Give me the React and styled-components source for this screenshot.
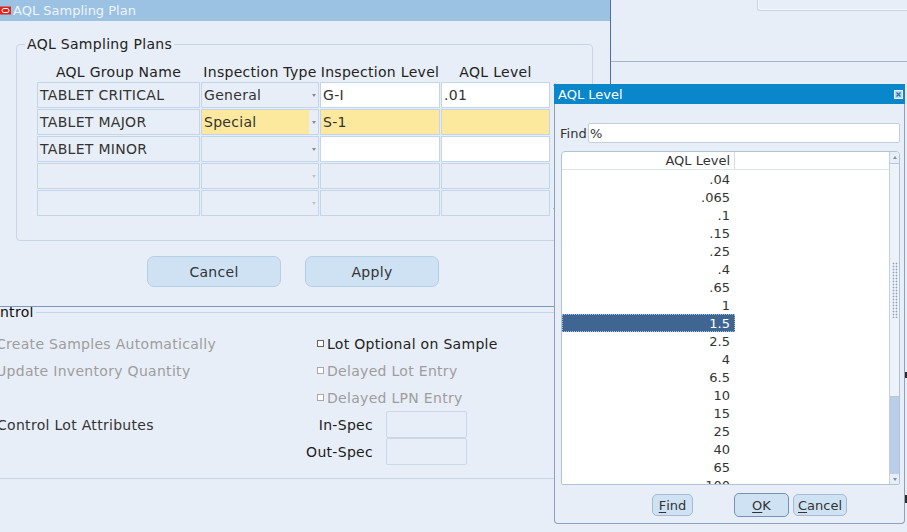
import React from 'react';
import styled, { createGlobalStyle } from 'styled-components';

const GlobalStyle = createGlobalStyle`
  html, body { margin: 0; padding: 0; }
  body { background: #e8eef7; font-family: "DejaVu Sans", "Liberation Sans", sans-serif; }
  *, *::before, *::after { box-sizing: border-box; }
`;

const BG = '#e8eef7';

const Screen = styled.div`
  position: relative;
  width: 907px;
  height: 532px;
  overflow: hidden;
  background: ${BG};
  color: #333;
  font-size: 14px;
  letter-spacing: 0.3px;
`;

/* ---------- background form ---------- */
const BackForm = styled.div`
  display: flex;
  flex-direction: column;
  width: 100%;
  height: 100%;
`;
const TopStrip = styled.div`
  height: 61px;
  display: flex;
  justify-content: flex-end;
  align-items: flex-start;
`;
const CornerPanel = styled.div`
  width: 150px;
  height: 11px;
  border-left: 1px solid #c7d3e2;
  border-bottom: 1px solid #c7d3e2;
  border-bottom-left-radius: 3px;
  box-shadow: inset 1px -1px 0 #f7fafd;
`;
const Rule = styled.div`
  border-top: 1px solid #a2b4c9;
`;
const ControlGroup = styled.div`
  margin-top: 250px;
  margin-left: -40px;
  width: 900px;
  border: 1px solid #c6d6ea;
  border-radius: 4px;
  padding: 0 0 13px 37px;
`;
const Legend = styled.div`
  width: fit-content;
  height: 18px;
  line-height: 18px;
  margin-top: -10px;
  margin-left: ${p => p.$offset}px;
  padding: 0 2px;
  background: ${BG};
  color: ${p => p.$color || '#222'};
  white-space: nowrap;
`;
const ControlGrid = styled.div`
  margin-top: 9px;
  display: flex;
`;
const Column = styled.div`
  width: ${p => p.$width}px;
  display: grid;
  grid-auto-rows: 27px;
`;
const Line = styled.div`
  display: flex;
  align-items: center;
  white-space: nowrap;
  padding-left: ${p => p.$indent || 0}px;
  margin-left: ${p => p.$shift || 0}px;
  color: ${p => (p.$disabled ? '#9d9d9d' : p.$strong ? '#222' : '#333')};
`;
const Check = styled.span`
  flex: none;
  width: 7px;
  height: 7px;
  margin-right: 3px;
  border: 1px solid ${p => (p.$disabled ? '#a8a8a8' : '#666')};
  background: #fff;
`;
const FieldLabel = styled.span`
  width: 73px;
  text-align: right;
  color: #1c1c1c;
`;
const SpecField = styled.div`
  width: 81px;
  height: 27px;
  margin-left: 13px;
  border: 1px solid #cbd8e8;
  border-radius: 2px;
  background: ${BG};
`;
const EdgeMarks = styled.div`
  position: absolute;
  right: 0;
  top: 372px;
  width: 2px;
  height: 131px;
  display: flex;
  flex-direction: column;
  justify-content: space-between;
`;
const EdgeMark = styled.span`
  width: 2px;
  height: ${p => p.$h}px;
  background: #2c2c2c;
`;

/* ---------- AQL Sampling Plan window ---------- */
const SamplingWindow = styled.section`
  position: absolute;
  left: 0;
  top: 0;
  width: 611px;
  height: 307px;
  background: ${BG};
  border-right: 1px solid #4e709c;
  border-bottom: 1px solid #7c98bc;
  display: flex;
  flex-direction: column;
`;
const WinTitle = styled.div`
  flex: none;
  height: 21px;
  background: #9bc2e2;
  display: flex;
  align-items: center;
  gap: 2px;
  color: #eef5fb;
  font-size: 13px;
  letter-spacing: 0;
`;
const WinBody = styled.div`
  padding: 23px 0 0 16px;
`;
const PlansGroup = styled.div`
  width: 577px;
  border: 1px solid #c6d6ea;
  border-radius: 4px;
  padding: 0 0 24px 20px;
`;
const TableWrap = styled.div`
  margin-top: 9px;
  display: flex;
`;
const TableCol = styled.div`
  display: flex;
  flex-direction: column;
`;
const HeadGrid = styled.div`
  display: grid;
  grid-template-columns: 163px 118px 120px 109px;
  column-gap: 1px;
  height: 20px;
`;
const HeadCell = styled.div`
  display: flex;
  align-items: center;
  justify-content: center;
  white-space: nowrap;
  color: #222;
`;
const BodyGrid = styled.div`
  display: grid;
  grid-template-columns: 163px 118px 120px 109px;
  grid-auto-rows: 26px;
  column-gap: 1px;
  row-gap: 1px;
`;
const tones = { plain: BG, edit: '#ffffff', current: '#fde99d' };
const Cell = styled.div`
  display: flex;
  align-items: center;
  padding-left: 2px;
  border: 1px solid #c4d4e9;
  background: ${p => tones[p.$tone]};
  color: #333;
  white-space: nowrap;
  overflow: hidden;
`;
const ComboCell = styled.div`
  display: flex;
  border: 1px solid #c4d4e9;
  background: ${BG};
  overflow: hidden;
`;
const ComboText = styled.div`
  flex: 1;
  display: flex;
  align-items: center;
  padding-left: 2px;
  background: ${p => tones[p.$tone]};
  color: #333;
  white-space: nowrap;
`;
const ArrowBox = styled.div`
  flex: none;
  width: 9px;
  display: flex;
  align-items: center;
  justify-content: center;
`;
const DownTri = styled.span`
  width: 0;
  height: 0;
  border-left: 2.5px solid transparent;
  border-right: 2.5px solid transparent;
  border-top: 3px solid ${p => p.$color || '#8a8a8a'};
`;
const UpTri = styled.span`
  width: 0;
  height: 0;
  border-left: 2.5px solid transparent;
  border-right: 2.5px solid transparent;
  border-bottom: 3px solid ${p => p.$color || '#8a8a8a'};
`;
const ScrollHint = styled.div`
  width: 8px;
  margin-left: 1px;
  padding: 21px 0 5px 2px;
  display: flex;
  flex-direction: column;
  justify-content: space-between;
`;
const ButtonRow = styled.div`
  margin-top: 15px;
  padding-left: 131px;
  display: flex;
  gap: 24px;
`;
const BigButton = styled.div`
  width: 134px;
  height: 31px;
  border: 1px solid #b7cee8;
  border-radius: 7px;
  background: #cfe2f4;
  display: flex;
  align-items: center;
  justify-content: center;
  color: #333;
`;

/* ---------- AQL Level LOV dialog ---------- */
const LovDialog = styled.section`
  position: absolute;
  left: 554px;
  top: 84px;
  width: 351px;
  height: 440px;
  display: flex;
  flex-direction: column;
  font-size: 13px;
  letter-spacing: 0;
`;
const LovTitle = styled.div`
  flex: none;
  height: 20px;
  background: #0a87ca;
  color: #fff;
  display: flex;
  align-items: center;
  padding-left: 4px;
`;
const CloseBox = styled.svg`
  margin-left: auto;
  margin-right: 2px;
`;
const LovBody = styled.div`
  flex: 1;
  background: ${BG};
  border: 1px solid #8ea2bc;
  border-top: none;
  border-radius: 0 0 4px 4px;
  padding: 19px 4px 6px 5px;
  display: flex;
  flex-direction: column;
`;
const FindRow = styled.div`
  height: 20px;
  display: flex;
  align-items: center;
`;
const FindInput = styled.div`
  width: 312px;
  height: 20px;
  margin-left: auto;
  border: 1px solid #c3cfdf;
  border-radius: 2px;
  background: #fff;
  display: flex;
  align-items: center;
  padding-left: 1px;
  color: #333;
`;
const ListBox = styled.div`
  margin: 8px 0 0 1px;
  width: 339px;
  height: 334px;
  border: 1px solid #b3c3d6;
  border-radius: 4px 4px 2px 2px;
  background: #fff;
  display: flex;
  overflow: hidden;
`;
const ListCol = styled.div`
  flex: 1;
  display: flex;
  flex-direction: column;
  overflow: hidden;
`;
const ListHeader = styled.div`
  flex: none;
  height: 18px;
  border-bottom: 1px solid #dfe4ea;
  display: flex;
`;
const ListHeadCell = styled.div`
  width: 173px;
  border-right: 1px solid #d6dce4;
  text-align: right;
  padding-right: 4px;
  line-height: 17px;
  color: #333;
`;
const ListRow = styled.div`
  flex: none;
  width: 173px;
  height: 18px;
  line-height: 20px;
  text-align: right;
  padding-right: 5px;
  color: ${p => (p.$selected ? '#fff' : '#333')};
  background: ${p => (p.$selected ? '#3f6592' : 'transparent')};
  outline: ${p => (p.$selected ? '1px dotted #a9bdd4' : 'none')};
  outline-offset: -1px;
`;
const ScrollBar = styled.div`
  width: 10px;
  border-left: 1px solid #c3d0df;
  background: ${BG};
  display: flex;
  flex-direction: column;
`;
const ScrollBtn = styled.div`
  flex: none;
  height: ${p => p.$h}px;
  display: flex;
  align-items: center;
  justify-content: center;
`;
const Thumb = styled.div`
  flex: none;
  height: 234px;
  border-top: 1px solid #b6c8dc;
  border-bottom: 1px solid #b6c8dc;
  background: #edf2f8;
  display: flex;
  justify-content: center;
  padding-top: 98px;
`;
const Grip = styled.div`
  width: 6px;
  height: 56px;
  background-image: radial-gradient(circle, #8fa4bd 0.8px, transparent 1.1px);
  background-size: 3px 3px;
`;
const Track = styled.div`
  flex: 1;
  background: #b9cee7;
`;
const LovButtons = styled.div`
  margin-top: 8px;
  height: 24px;
  padding-left: 92px;
  display: flex;
  align-items: center;
`;
const LovButton = styled.div`
  width: ${p => p.$w}px;
  height: ${p => (p.$default ? 24 : 22)}px;
  margin-left: ${p => p.$gap || 0}px;
  border: 1px solid ${p => (p.$default ? '#7590b3' : '#a5bbd4')};
  border-radius: 5px;
  background: #cfe2f4;
  display: flex;
  align-items: center;
  justify-content: center;
  color: #333;
  u { text-decoration: underline; text-underline-offset: 2px; }
`;

const OracleIcon = () => (
  <svg width="11" height="9" viewBox="0 0 11 9">
    <rect x="0" y="0.5" width="11" height="8" fill="#e2231a" />
    <rect x="2" y="2.5" width="7" height="4" rx="2" fill="none" stroke="#fff" strokeWidth="1" />
  </svg>
);

const rows = [
  { name: 'TABLET CRITICAL', type: 'General', level: 'G-I', aql: '.01', typeTone: 'plain', tone: 'edit' },
  { name: 'TABLET MAJOR', type: 'Special', level: 'S-1', aql: '', typeTone: 'current', tone: 'current' },
  { name: 'TABLET MINOR', type: '', level: '', aql: '', typeTone: 'plain', tone: 'edit' },
  { name: '', type: '', level: '', aql: '', typeTone: 'plain', tone: 'plain', dim: true },
  { name: '', type: '', level: '', aql: '', typeTone: 'plain', tone: 'plain', dim: true },
];

const levels = ['.04', '.065', '.1', '.15', '.25', '.4', '.65', '1', '1.5', '2.5', '4', '6.5', '10', '15', '25', '40', '65', '100'];

export default function App() {
  return (
    <Screen>
      <GlobalStyle />
      <BackForm>
        <TopStrip>
          <CornerPanel />
        </TopStrip>
        <Rule />
        <ControlGroup>
          <Legend $offset={-19} $color="#0d0d0d">Control</Legend>
          <ControlGrid>
            <Column $width={302}>
              <Line $disabled $shift={-2}>Create Samples Automatically</Line>
              <Line $disabled $shift={-2}>Update Inventory Quantity</Line>
              <Line />
              <Line $shift={-1}>Control Lot Attributes</Line>
              <Line />
            </Column>
            <Column $width={300}>
              <Line $indent={17} $strong><Check />Lot Optional on Sample</Line>
              <Line $indent={17} $disabled><Check $disabled />Delayed Lot Entry</Line>
              <Line $indent={17} $disabled><Check $disabled />Delayed LPN Entry</Line>
              <Line><FieldLabel>In-Spec</FieldLabel><SpecField /></Line>
              <Line><FieldLabel>Out-Spec</FieldLabel><SpecField /></Line>
            </Column>
          </ControlGrid>
        </ControlGroup>
      </BackForm>
      <EdgeMarks>
        <EdgeMark $h={6} />
        <EdgeMark $h={8} />
      </EdgeMarks>

      <SamplingWindow>
        <WinTitle>
          <OracleIcon />
          <span>AQL Sampling Plan</span>
        </WinTitle>
        <WinBody>
          <PlansGroup>
            <Legend $offset={-12}>AQL Sampling Plans</Legend>
            <TableWrap>
              <TableCol>
                <HeadGrid>
                  <HeadCell>AQL Group Name</HeadCell>
                  <HeadCell>Inspection Type</HeadCell>
                  <HeadCell>Inspection Level</HeadCell>
                  <HeadCell>AQL Level</HeadCell>
                </HeadGrid>
                <BodyGrid>
                  {rows.map((r, i) => (
                    <React.Fragment key={i}>
                      <Cell $tone="plain">{r.name}</Cell>
                      <ComboCell>
                        <ComboText $tone={r.typeTone}>{r.type}</ComboText>
                        <ArrowBox><DownTri $color={r.dim ? '#bfc4cb' : '#8a8a8a'} /></ArrowBox>
                      </ComboCell>
                      <Cell $tone={r.tone}>{r.level}</Cell>
                      <Cell $tone={r.tone}>{r.aql}</Cell>
                    </React.Fragment>
                  ))}
                </BodyGrid>
              </TableCol>
              <ScrollHint>
                <UpTri $color="#9aa3ad" />
                <DownTri $color="#9aa3ad" />
              </ScrollHint>
            </TableWrap>
          </PlansGroup>
          <ButtonRow>
            <BigButton>Cancel</BigButton>
            <BigButton>Apply</BigButton>
          </ButtonRow>
        </WinBody>
      </SamplingWindow>

      <LovDialog>
        <LovTitle>
          <span>AQL Level</span>
          <CloseBox width="9" height="9" viewBox="0 0 9 9">
            <rect x="0.5" y="0.5" width="8" height="8" fill="#b7d5ee" stroke="#e6f1fa" />
            <path d="M2.5 2.5 L6.5 6.5 M6.5 2.5 L2.5 6.5" stroke="#2a6ea8" strokeWidth="1.2" />
          </CloseBox>
        </LovTitle>
        <LovBody>
          <FindRow>
            <span>Find</span>
            <FindInput>%</FindInput>
          </FindRow>
          <ListBox>
            <ListCol>
              <ListHeader>
                <ListHeadCell>AQL Level</ListHeadCell>
              </ListHeader>
              {levels.map(v => (
                <ListRow key={v} $selected={v === '1.5'}>{v}</ListRow>
              ))}
            </ListCol>
            <ScrollBar>
              <ScrollBtn $h={11}><UpTri $color="#7d8fa6" /></ScrollBtn>
              <Thumb><Grip /></Thumb>
              <Track />
              <ScrollBtn $h={10}><DownTri $color="#7d8fa6" /></ScrollBtn>
            </ScrollBar>
          </ListBox>
          <LovButtons>
            <LovButton $w={41}><u>F</u>ind</LovButton>
            <LovButton $w={55} $gap={41} $default><u>O</u>K</LovButton>
            <LovButton $w={54} $gap={4}><u>C</u>ancel</LovButton>
          </LovButtons>
        </LovBody>
      </LovDialog>
    </Screen>
  );
}
